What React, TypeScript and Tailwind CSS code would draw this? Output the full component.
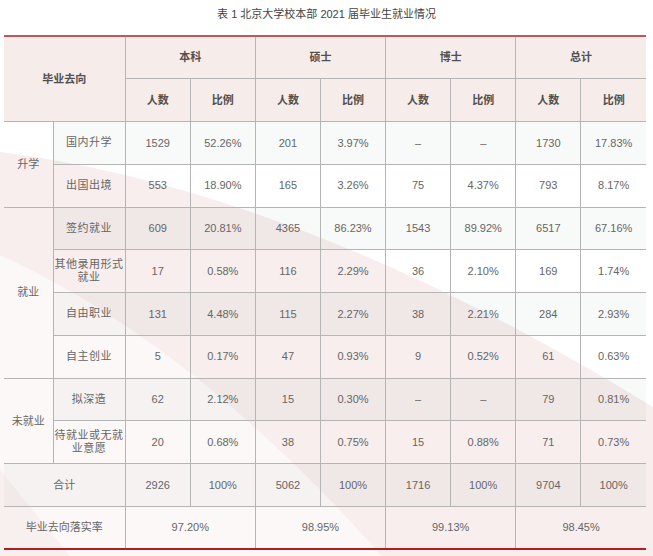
import React from "react";

type Row = {
  cat?: string;
  catSpan?: number;
  sub: React.ReactNode;
  vals: string[];
};

const rows: Row[] = [
  { cat: "升学", catSpan: 2, sub: "国内升学", vals: ["1529", "52.26%", "201", "3.97%", "–", "–", "1730", "17.83%"] },
  { sub: "出国出境", vals: ["553", "18.90%", "165", "3.26%", "75", "4.37%", "793", "8.17%"] },
  { cat: "就业", catSpan: 4, sub: "签约就业", vals: ["609", "20.81%", "4365", "86.23%", "1543", "89.92%", "6517", "67.16%"] },
  {
    sub: (
      <>
        其他录用形式
        <br />
        就业
      </>
    ),
    vals: ["17", "0.58%", "116", "2.29%", "36", "2.10%", "169", "1.74%"],
  },
  { sub: "自由职业", vals: ["131", "4.48%", "115", "2.27%", "38", "2.21%", "284", "2.93%"] },
  { sub: "自主创业", vals: ["5", "0.17%", "47", "0.93%", "9", "0.52%", "61", "0.63%"] },
  { cat: "未就业", catSpan: 2, sub: "拟深造", vals: ["62", "2.12%", "15", "0.30%", "–", "–", "79", "0.81%"] },
  {
    sub: (
      <>
        待就业或无就
        <br />
        业意愿
      </>
    ),
    vals: ["20", "0.68%", "38", "0.75%", "15", "0.88%", "71", "0.73%"],
  },
];

const groups = ["本科", "硕士", "博士", "总计"];
const totals = ["2926", "100%", "5062", "100%", "1716", "100%", "9704", "100%"];
const rates = ["97.20%", "98.95%", "99.13%", "98.45%"];

const cell = "border border-[#b5b5b5] text-center align-middle p-0";
const stripe = "bg-[rgba(90,110,110,0.045)]";
const head = "border border-[#b5b5b5] border-t-2 border-t-[#c4565a] text-center align-middle font-bold text-[#505050] p-0";

// background decoration behind the table
const Backdrop = () => (
  <svg className="absolute inset-0" width="653" height="556" viewBox="0 0 653 556">
    <rect width="653" height="556" fill="#ffffff" />
    <path d="M0,152 Q300,190 653,407 L653,556 L0,556 Z" fill="#f7eeed" />
    <path d="M0,255 Q210,350 420,600 L0,600 Z" fill="#fcf8f7" />
    <path d="M0,470 L70,556 L0,556 Z" fill="#f8f0ef" />
  </svg>
);

export default function App() {
  return (
    <div className="relative w-[653px] h-[556px] overflow-hidden bg-white font-[Liberation_Sans,Noto_Sans_CJK_SC,sans-serif] text-[11px] text-[#666]">
      <Backdrop />
      <div className="relative flex flex-col">
        <div className="h-[35px] flex items-center justify-center pb-[6px] text-[#444]">
          表 1 北京大学校本部 2021 届毕业生就业情况
        </div>
        <table className="ml-[4px] w-[642px] table-fixed border-collapse">
          <colgroup>
            <col className="w-[49px]" />
            <col className="w-[72px]" />
            {Array.from({ length: 8 }).map((_, i) => (
              <col key={i} className="w-[65px]" />
            ))}
          </colgroup>
          <thead>
            <tr className="h-[42.75px]">
              <th colSpan={2} rowSpan={2} className={`${head} border-l-0 bg-[#f6ecea]`}>
                毕业去向
              </th>
              {groups.map((g, i) => (
                <th key={g} colSpan={2} className={`${head} bg-[#f6ecea] ${i === 3 ? "border-r-0" : ""}`}>
                  {g}
                </th>
              ))}
            </tr>
            <tr className="h-[42.75px]">
              {groups.map((g, i) => (
                <React.Fragment key={g}>
                  <th className={`${cell} font-bold text-[#505050] bg-[#f6ecea]`}>人数</th>
                  <th className={`${cell} font-bold text-[#505050] bg-[#f6ecea] ${i === 3 ? "border-r-0" : ""}`}>比例</th>
                </React.Fragment>
              ))}
            </tr>
          </thead>
          <tbody>
            {rows.map((r, ri) => {
              const bg = ri % 2 === 0 ? stripe : "";
              return (
                <tr key={ri} className="h-[42.75px]">
                  {r.cat && (
                    <td rowSpan={r.catSpan} className={`${cell} border-l-0`}>
                      {r.cat}
                    </td>
                  )}
                  <td className={`${cell} ${bg} whitespace-nowrap leading-[13px] tracking-[0.5px]`}>{r.sub}</td>
                  {r.vals.map((v, vi) => (
                    <td key={vi} className={`${cell} ${bg} ${vi === 7 ? "border-r-0" : ""}`}>
                      {v}
                    </td>
                  ))}
                </tr>
              );
            })}
            <tr className="h-[42.75px]">
              <td colSpan={2} className={`${cell} ${stripe} border-l-0`}>
                合计
              </td>
              {totals.map((v, vi) => (
                <td key={vi} className={`${cell} ${stripe} ${vi === 7 ? "border-r-0" : ""}`}>
                  {v}
                </td>
              ))}
            </tr>
            <tr className="h-[42.75px]">
              <td colSpan={2} className={`${cell} border-l-0 border-b-2 border-b-[#b21d22]`}>
                毕业去向落实率
              </td>
              {rates.map((v, vi) => (
                <td
                  key={vi}
                  colSpan={2}
                  className={`${cell} border-b-2 border-b-[#b21d22] ${vi === 3 ? "border-r-0" : ""}`}
                >
                  {v}
                </td>
              ))}
            </tr>
          </tbody>
        </table>
      </div>
    </div>
  );
}
